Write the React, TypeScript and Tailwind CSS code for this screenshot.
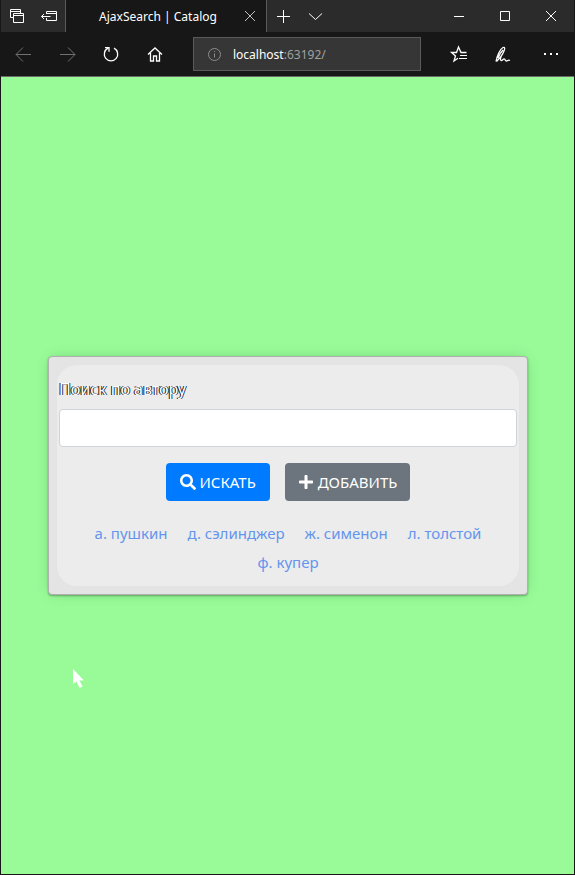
import type { ReactNode } from "react";
import { FaPlus, FaSearch } from "react-icons/fa";

const authors = ["а. пушкин", "д. сэлинджер", "ж. сименон", "л. толстой", "ф. купер"];

function Glyph({ children, size = 16 }: { children: ReactNode; size?: number }) {
  return (
    <svg width={size} height={size} viewBox={`0 0 ${size} ${size}`} fill="none" stroke="currentColor" aria-hidden="true">
      {children}
    </svg>
  );
}

function TitleBar() {
  return (
    <header className="flex h-8 shrink-0 items-stretch bg-[#2b2b2b] text-white">
      <div className="flex w-16 items-center justify-between pr-2 pl-2">
        <button aria-label="Tabs you've set aside">
          <Glyph>
            <path d="M4 9.500H1.500v-8h10V5M1.500 3.500h10M4.500 5.500h10v9h-10zM4.500 7.500h10" />
          </Glyph>
        </button>
        <button aria-label="Set these tabs aside">
          <Glyph>
            <path d="M5.500 6V3.500h10v9h-10V10M5.500 5.500h10M.5 8.500h9M3 6L.5 8.500 3 11" />
          </Glyph>
        </button>
      </div>
      <div className="flex w-[202px] items-center border-x border-[#5a5a5a] bg-[#171717] pr-2">
        <span className="flex-1 pt-px pl-2 text-center text-xs whitespace-nowrap">AjaxSearch | Catalog</span>
        <button aria-label="Close tab" className="text-[#c0c0c0]">
          <Glyph>
            <path d="M3 3l10 10M13 3L3 13" />
          </Glyph>
        </button>
      </div>
      <div className="flex items-center gap-4 pl-2">
        <button aria-label="New tab">
          <Glyph>
            <path d="M8.500 2v13M2 8.500h13" />
          </Glyph>
        </button>
        <button aria-label="Show tab previews">
          <Glyph>
            <path d="M2 5.500l6.500 6 6.500-6" />
          </Glyph>
        </button>
      </div>
      <div className="ml-auto flex items-center gap-[30px] pr-[15px]">
        <button aria-label="Minimize">
          <Glyph>
            <path d="M3 8.500h10" />
          </Glyph>
        </button>
        <button aria-label="Maximize">
          <Glyph>
            <path d="M3.500 3.500h9v9h-9z" />
          </Glyph>
        </button>
        <button aria-label="Close">
          <Glyph>
            <path d="M3 3l10 10M13 3L3 13" />
          </Glyph>
        </button>
      </div>
    </header>
  );
}

function ToolBar() {
  return (
    <nav className="flex h-[45px] shrink-0 items-center border-b border-[#6b6b6b] bg-[#171717] pl-3 text-white">
      <div className="flex shrink-0 items-center gap-6">
        <button aria-label="Back" className="text-[#707070]">
          <Glyph size={20}>
            <path d="M3 10.500h15M10 3.500l-7 7 7 7" />
          </Glyph>
        </button>
        <button aria-label="Forward" className="text-[#707070]">
          <Glyph size={20}>
            <path d="M3 10.500h15M11 3.500l7 7-7 7" />
          </Glyph>
        </button>
        <button aria-label="Refresh">
          <Glyph size={20}>
            <path strokeWidth="1.300" d="M7 4.200a6.700 6.700 0 1 0 6 0M4 3.700h4v4" />
          </Glyph>
        </button>
        <button aria-label="Home">
          <Glyph size={20}>
            <path strokeWidth="1.300" d="M3 10.500l7-6.500 7 6.500M5.500 9v8h3v-5h3v5h3V9" />
          </Glyph>
        </button>
      </div>
      <div className="ml-7 flex h-[34px] min-w-0 flex-1 items-center gap-[11px] border border-[#5a5a5a] bg-[#363636] pl-3">
        <span className="text-[#8c8c8c]">
          <Glyph size={16}>
            <circle cx="8.500" cy="8.500" r="6" />
            <path d="M8.500 7.500v4M8.500 5v1" />
          </Glyph>
        </span>
        <div className="pt-px text-xs whitespace-nowrap text-[#a0a0a0]">
          <span className="text-white">localhost</span>:63192/
        </div>
      </div>
      <div className="ml-7 flex shrink-0 items-center gap-6 pr-[13px]">
        <button aria-label="Favorites">
          <Glyph size={20}>
            <path strokeWidth="1.300" d="M17.500 8.500H12L9.500 3 7.500 8.500H2.500l4 3.500-1.500 5 4-2.700" />
            <path d="M11 11.500h7M10 14.500h8" />
          </Glyph>
        </button>
        <button aria-label="Add notes">
          <Glyph size={20}>
            <path
              strokeWidth="1.300"
              strokeLinejoin="round"
              d="M3 17.500C4 12 7 5 10 3.500c2-.8 2 1 1 3.500C9.500 11 6 15 3.500 17.500M5 14c1-3 3-6 5-8M8.500 11.500C7.500 14 7 16 8 16.500c1.500.5 2-2 3.500-1.500 1 .5.500 2 2 2s1.500-1.500 3.500-.5"
            />
          </Glyph>
        </button>
        <button aria-label="More" className="ml-1">
          <Glyph size={20}>
            <path strokeWidth="2" d="M3 10h2M9 10h2M15 10h2" />
          </Glyph>
        </button>
      </div>
    </nav>
  );
}

function SearchCard() {
  return (
    <form
      onSubmit={(event) => event.preventDefault()}
      className="w-full rounded border border-[#b0b0b0] bg-[#e4e4e4] p-2 shadow-[0_1px_2px_rgba(0,0,0,0.3),0_0_14px_-4px_rgba(0,80,0,0.3)]"
    >
      <div className="rounded-[20px] bg-[#ececec] px-[2px] pt-3 pb-3">
        <label
          htmlFor="author"
          className="block text-base leading-6 text-white text-shadow-[-1px_0_0_#2a0a04,1px_0_0_#123a70]"
        >
          Поиск по автору
        </label>
        <input
          id="author"
          type="text"
          className="mt-2 block h-[38px] w-full rounded border border-[#ced4da] bg-white px-3 outline-none"
        />
        <div className="mt-4 flex justify-center gap-[15px]">
          <button
            type="submit"
            className="flex h-[38px] min-w-[104px] items-center justify-center gap-1 rounded bg-[#007bff] px-[13px] text-[15px] text-white"
          >
            <FaSearch size={16} />
            ИСКАТЬ
          </button>
          <button
            type="button"
            className="flex h-[38px] items-center justify-center gap-1 rounded bg-[#6c757d] px-[13px] text-[15px] text-white"
          >
            <FaPlus size={16} />
            ДОБАВИТЬ
          </button>
        </div>
        <div className="mt-5 flex flex-wrap justify-center gap-x-5 gap-y-[5px] px-6 text-[15px] leading-6 text-[#6495ed]">
          {authors.map((author) => (
            <a key={author} href="#author">
              {author}
            </a>
          ))}
        </div>
      </div>
    </form>
  );
}

export default function App() {
  return (
    <div className="flex min-h-screen flex-col border-x border-b border-[#171717] font-['Noto_Sans',sans-serif]">
      <TitleBar />
      <ToolBar />
      <main className="relative flex flex-1 items-center bg-[#98fb98] pr-[46px] pl-[47px]">
        <SearchCard />
        <svg className="absolute top-[592px] left-[72px]" width="12" height="20" viewBox="0 0 12 20" aria-hidden="true">
          <path d="M0 0v15l3.500-2.500L6.500 19l3-1.500-3-6H11z" fill="#fff" />
        </svg>
      </main>
    </div>
  );
}
